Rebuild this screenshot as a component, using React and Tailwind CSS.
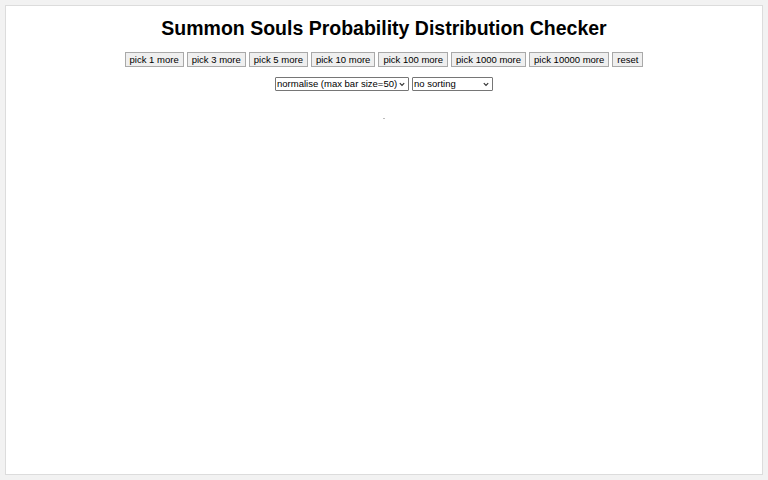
import React from "react";

const picks = [1, 3, 5, 10, 100, 1000, 10000];

function Chevron() {
  return (
    <svg className="absolute right-[3px] top-[4px] w-[6px] h-[5px] pointer-events-none" viewBox="0 0 6 5">
      <path d="M0.8 1.2 L3 3.4 L5.2 1.2" fill="none" stroke="#333" strokeWidth="1.2" />
    </svg>
  );
}

function Dropdown({ width, label }) {
  return (
    <div className={`relative h-[14px] border border-[#767676] rounded-[1px] bg-white overflow-hidden ${width}`}>
      <select className="block w-full h-[12px] m-0 py-0 pl-[1px] pr-[8px] appearance-none bg-transparent text-[9.5px] leading-[12px] text-black outline-none">
        <option>{label}</option>
      </select>
      <Chevron />
    </div>
  );
}

function App() {
  return (
    <div className="w-[768px] h-[480px] bg-[#f2f2f2] p-[5px] font-['Liberation_Sans',Arial,sans-serif]">
      <div className="h-full bg-white border border-[#dcdcdc] flex flex-col items-center">
        <h1 className="mt-[13px] text-[19.5px] leading-[18px] font-bold text-black">
          Summon Souls Probability Distribution Checker
        </h1>
        <div className="mt-[15px] flex gap-[3px]">
          {picks.map((n) => (
            <button
              key={n}
              className="h-[15px] px-[4px] bg-[#efefef] border border-[#a9a9a9] text-[9.5px] leading-[13px] text-black"
            >
              pick {n} more
            </button>
          ))}
          <button className="h-[15px] px-[4px] bg-[#efefef] border border-[#a9a9a9] text-[9.5px] leading-[13px] text-black">
            reset
          </button>
        </div>
        <div className="mt-[10px] flex gap-[3px]">
          <Dropdown width="w-[134px]" label="normalise (max bar size=50)" />
          <Dropdown width="w-[81px]" label="no sorting" />
        </div>
        <div className="mt-[27px] w-[2px] h-[1px] bg-[#bbbbbb]" />
      </div>
    </div>
  );
}

export default App;
